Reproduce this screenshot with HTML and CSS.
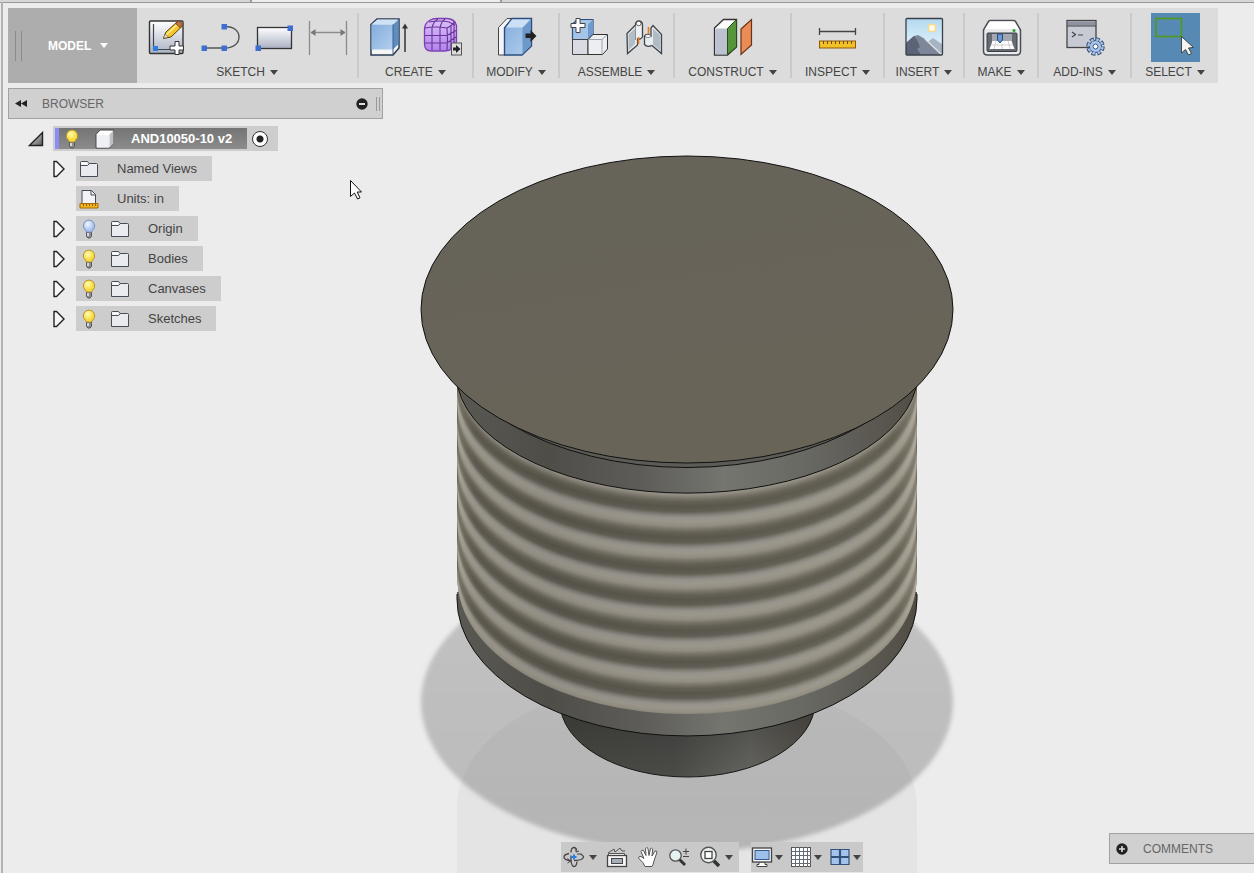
FILE: index.html
```html
<!DOCTYPE html>
<html lang="en">
<head>
<meta charset="utf-8">
<title>AND10050-10 v2</title>
<link rel="stylesheet" href="styles.css">
</head>
<body>
<svg class="defs" aria-hidden="true">
  <defs>
    <linearGradient id="steel" x1="0" y1="0" x2="0" y2="1"><stop offset="0" stop-color="#fff"/><stop offset="1" stop-color="#aab1c2"/></linearGradient>
    <linearGradient id="blue" x1="0" y1="0" x2="1" y2="1"><stop offset="0" stop-color="#82addc"/><stop offset="1" stop-color="#b4cfee"/></linearGradient>
    <linearGradient id="purple" x1="0" y1="0" x2="0" y2="1"><stop offset="0" stop-color="#dcc2f8"/><stop offset="1" stop-color="#b084ec"/></linearGradient>
    <linearGradient id="sky" x1="0" y1="0" x2="0" y2="1"><stop offset="0" stop-color="#b3d9f0"/><stop offset="1" stop-color="#eef8fc"/></linearGradient>
    <radialGradient id="glow" cx=".4" cy=".35"><stop offset="0" stop-color="#fffcb0"/><stop offset="1" stop-color="#f8d93c"/></radialGradient>
    <radialGradient id="dim" cx=".4" cy=".35"><stop offset="0" stop-color="#f2f6ff"/><stop offset="1" stop-color="#a9c3f3"/></radialGradient>
    <linearGradient id="fold" x1="0" y1="0" x2="1" y2="1"><stop offset="0" stop-color="#eee"/><stop offset="1" stop-color="#555"/></linearGradient>
  </defs>
  <symbol id="bulb-base" viewBox="0 0 14 20"><path d="M4.500 13h5v4.500l-1.500 1.500h-2l-1.500-1.500z" fill="#8a8d92" stroke="#54575c"/><path d="M6 14v3" stroke="#eee" stroke-width="1.500"/></symbol>
  <symbol id="bulb-on" viewBox="0 0 14 20"><use href="#bulb-base"/><path d="M7 1a6 5.800 0 0 1 3.600 10.200L9.500 13h-5L3.400 11.200A6 5.800 0 0 1 7 1z" fill="url(#glow)" stroke="#b9952f"/></symbol>
  <symbol id="bulb-off" viewBox="0 0 14 20"><use href="#bulb-base"/><path d="M7 1a6 5.800 0 0 1 3.600 10.200L9.500 13h-5L3.400 11.200A6 5.800 0 0 1 7 1z" fill="url(#dim)" stroke="#7d93bd"/></symbol>
  <symbol id="folder" viewBox="0 0 20 20"><path d="M1.500 17.500v-14q0-1 1-1h6l1.500 2h7.500q1 0 1 1v12z" fill="#e9ebef" stroke="#474d57"/><path d="M2 6.500h6.500l2-2" fill="none" stroke="#474d57"/><path d="M2.500 3.500h5.500v2h-5.500z" fill="#fff"/></symbol>
  <symbol id="expander" viewBox="0 0 12 18"><path d="M1 1.500h2.500L11 9 3.500 16.500H1z" fill="#f5f5f5" stroke="#222" stroke-width="1.400"/></symbol>
</svg>

<svg class="scene" viewBox="0 0 1254 873" preserveAspectRatio="xMidYMid slice" role="img" aria-label="3D model">
  <defs>
    <filter id="soft" x="-5%" y="-5%" width="110%" height="110%"><feGaussianBlur stdDeviation="2"/></filter>
    <linearGradient id="disc" x1="0" y1="0" x2=".3" y2="1"><stop offset="0" stop-color="#66635a"/><stop offset="1" stop-color="#696458"/></linearGradient>
    <linearGradient id="ring" x1="0" x2="1"><stop offset="0" stop-color="#5a5852"/><stop offset=".2" stop-color="#4f4d48"/><stop offset=".4" stop-color="#5d5c58"/><stop offset=".58" stop-color="#757570"/><stop offset=".75" stop-color="#696964"/><stop offset="1" stop-color="#514d45"/></linearGradient>
    <linearGradient id="stem" x1="0" x2="1"><stop offset="0" stop-color="#464641"/><stop offset=".45" stop-color="#4b4b48"/><stop offset=".75" stop-color="#656560"/><stop offset="1" stop-color="#554f47"/></linearGradient>
    <linearGradient id="stem-shade" x1="0" y1="0" x2="0" y2="1"><stop offset=".2" stop-color="#222" stop-opacity=".4"/><stop offset="1" stop-color="#222" stop-opacity="0"/></linearGradient>
    <linearGradient id="shadow" x1="0" y1="0" x2="0" y2="1"><stop offset="0" stop-color="#c3c3c3"/><stop offset="1" stop-color="#bababa"/></linearGradient>
    <linearGradient id="mirror" x1="0" y1="0" x2="0" y2="1"><stop offset="0" stop-color="#555" stop-opacity=".02"/><stop offset=".25" stop-color="#555" stop-opacity=".06"/><stop offset="1" stop-color="#555" stop-opacity=".05"/></linearGradient>
    <linearGradient id="side" x1="0" x2="1"><stop offset="0" stop-color="#cfc8b6" stop-opacity=".3"/><stop offset=".04" stop-color="#8a867a" stop-opacity=".1"/><stop offset=".2" stop-color="#444" stop-opacity=".08"/><stop offset=".5" stop-color="#999" stop-opacity=".05"/><stop offset=".95" stop-color="#aaa690" stop-opacity=".15"/><stop offset="1" stop-color="#cfc8b6" stop-opacity=".4"/></linearGradient>
  </defs>
  <ellipse cx="687" cy="702" rx="266" ry="150" fill="url(#shadow)" filter="url(#soft)"/>
  <path d="M457 873V806A230 130 0 0 1 917 806V873z" fill="url(#mirror)"/>
  <path d="M560 690V702A127.500 75 0 0 0 815 702V690z" fill="url(#stem)"/>
  <path d="M560 690V702A127.500 75 0 0 0 815 702V690z" fill="url(#stem-shade)" stroke="#161616"/>
  <path d="M457 592V599A230 137 0 0 0 917 599V592z" fill="url(#ring)"/>
  <path d="M457 594V599A230 137 0 0 0 917 599V594" fill="none" stroke="#111"/>
  <g id="ribs"></g>
  <path d="M457.500 368V578A229.500 136 0 0 0 916.500 578V368z" fill="url(#side)"/>
  <path d="M454 380L458 388A231 121 0 0 0 916 388L920 380L687 330z" fill="url(#ring)" stroke="#111"/>
  <ellipse cx="687" cy="319" rx="250" ry="148.500" fill="#5c5b56" stroke="#111"/>
  <ellipse cx="687" cy="309.500" rx="266" ry="153.500" fill="url(#disc)" stroke="#111"/>
  <path d="M350.500 180.500v16l4-3.500 3 6 2.500-1.200-2.800-5.800h4.300z" fill="#fff" stroke="#111"/>
</svg>

<div class="app">
  <div class="tabs"><span class="tab"></span><span class="tab tab-active"></span><span class="tab"></span></div>
  <header class="toolbar">
    <button class="model" type="button"><span class="grip"></span><span>MODEL</span><span class="caret"></span></button>

    <section class="group">
      <div class="tools">
        <button type="button" class="tool" aria-label="Create sketch"><svg viewBox="144 13 44 49" width="44" height="49"><rect x="149.500" y="21" width="33.500" height="32.500" rx="1" fill="url(#steel)" stroke="#333" stroke-width="1.400"/><path d="M153.500 24V49.500H180" fill="none" stroke="#3e454f" stroke-width="1.200"/><rect x="153" y="46" width="5" height="5" fill="#2f7de0"/><path d="M163.500 38.500l2.500-6.500 11.500-10.500 5 4.500-11.500 11z" fill="#f5c52a" stroke="#54440f"/><path d="M166 35l12-11" stroke="#fff09a" stroke-width="1.500"/><path d="M175.500 23.500l3-2.500q3 0 4 4l-2.500 2.500z" fill="#c2703f" stroke="#5e3520" stroke-width=".7"/><path d="M163.500 38.500l1.500-4.500 3.500 3z" fill="#f6dfb5" stroke="#444" stroke-width=".5"/><path d="M175 41.500h4v4.500h4.500v4H179v4.500h-4V50h-5v-4h5z" fill="#fff" stroke="#333"/></svg></button>
        <button type="button" class="tool" aria-label="Line"><svg viewBox="198 13 44 49" width="44" height="49"><path d="M204 48H225C234 48 239 43 239 37S234 26.500 225 26.500" fill="none" stroke="#555" stroke-width="1.400"/><path d="M201.500 45.500h5.500v5.500h-5.500zM221.500 45.500h5.500v5.500h-5.500zM221.500 24h5.500v5.500h-5.500z" fill="#3c6fd0"/></svg></button>
        <button type="button" class="tool" aria-label="Rectangle"><svg viewBox="252 13 44 49" width="44" height="49"><rect x="257.500" y="27.500" width="34" height="21" fill="url(#steel)" stroke="#333" stroke-width="1.300"/><path d="M287.500 25.500h5.500v5.500h-5.500zM255.500 45.500h5.500v5.500h-5.500z" fill="#3c6fd0"/></svg></button>
        <button type="button" class="tool" aria-label="Sketch dimension"><svg viewBox="306 13 44 49" width="44" height="49"><path d="M309.500 21v34M346.500 21v34M311 32.500h34" stroke="#8c8c8c" stroke-width="1.300"/><path d="M310.500 32.500l5-3.500v7zM345.500 32.500l-5-3.500v7z" fill="#777"/></svg></button>
      </div>
      <button type="button" class="label">SKETCH<span class="caret"></span></button>
    </section>

    <section class="group">
      <div class="tools">
        <button type="button" class="tool" aria-label="Extrude"><svg viewBox="367 13 44 49" width="44" height="49"><path d="M371 24.500l6-5.500h22v29l-6 7h-22z" fill="#f5f5f5" stroke="#2b3c55" stroke-width="1.500"/><path d="M371.500 24.500h21.500v25h-21.500z" fill="url(#blue)"/><path d="M372 24l5.500-4.500H398L393 24z" fill="#cfe1f4"/><path d="M393 24.500l5.500-5v24.500l-5.500 5.500z" fill="#5f8dc2"/><path d="M393 24.500V54" stroke="#3e6290"/><path d="M405 52V25" stroke="#333" stroke-width="1.500"/><path d="M402 28.500l3-5 3 5z" fill="#333"/></svg></button>
        <button type="button" class="tool" aria-label="Create form"><svg viewBox="421 13 44 49" width="44" height="49"><path d="M424.500 30q0-7 5-9.500 3-2 8-2h9q8 0 10 7v16q-1 5-4 7-3 2.500-8 2.500h-13q-7 0-7-7z" fill="url(#purple)" stroke="#7e3fb4" stroke-width="1.300"/><path d="M425 28q10-2 22 0 1 12 0 22M425 35.500h22l9-5M425 43h22l9-6M432 28v22M440 28v22M447 28q6-3 8-7M432 28q1-6 6-9M440 28q1-6 5-9M429 22q12-2 20 0l6 3M451 25v24M454 23v24" fill="none" stroke="#6b329c" stroke-width="1.100"/><rect x="451.500" y="43" width="10" height="12" fill="#ddd" stroke="#555"/><path d="M453 47.500h3V45l4.500 4-4.500 4v-2.500h-3z" fill="#222"/></svg></button>
      </div>
      <button type="button" class="label">CREATE<span class="caret"></span></button>
    </section>

    <section class="group">
      <div class="tools">
        <button type="button" class="tool" aria-label="Press pull"><svg viewBox="494 13 44 49" width="44" height="49"><path d="M498.500 27.500l8.500-9h5l-7 9V55h-6.500z" fill="#f4f5f8" stroke="#444"/><path d="M504.500 28l7.500-9.500h19.500V46L522 55h-17.500z" fill="url(#blue)" stroke="#2b4e7c" stroke-width="1.400"/><path d="M506 27.500l6-8H530l-7.500 8z" fill="#cde0f5"/><path d="M522.500 28l8.500-8.500v26l-8.500 8.500z" fill="#6c98ca"/><path d="M525.500 33.500h5v-3.500l6 6-6 6v-4h-5z" fill="#222"/></svg></button>
      </div>
      <button type="button" class="label">MODIFY<span class="caret"></span></button>
    </section>

    <section class="group">
      <div class="tools">
        <button type="button" class="tool" aria-label="New component"><svg viewBox="568 13 44 49" width="44" height="49"><path d="M572.500 24l5-4.500h15.500V34l-5 5.500h-15.500z" fill="#a4c4e8" stroke="#2b4e7c" stroke-width="1.200"/><path d="M588 24.500l5-5V34l-5 5z" fill="#6f9ace"/><path d="M572.500 39.500h15.500v15h-15.500z" fill="#d8dbe2" stroke="#444"/><path d="M588 39.500l5-5h14.500V49l-5 5.500H588z" fill="#eceef2" stroke="#333"/><path d="M588.500 39.500h13.500v14.500M602 39.500l5-4.500" fill="none" stroke="#9da3ae"/><path d="M576 18.500h4v5h5v4h-5v5h-4v-5h-5v-4h5z" fill="#fff" stroke="#444"/></svg></button>
        <button type="button" class="tool" aria-label="Joint"><svg viewBox="622 13 44 49" width="44" height="49"><path d="M627 33.500l8.500-8.500q0-3.500 3-4 4 0 4 4v12q-2 3-5 2v6l-10 8.500z" fill="#edf0f2" stroke="#3f4348" stroke-width="1.300"/><path d="M628.500 34.500l6.500-6.500v16l-6.500 6.500z" fill="#b3bdc5"/><path d="M635.500 26v14" stroke="#8b9298"/><circle cx="638.700" cy="23.500" r="2.300" fill="#fff" stroke="#444" stroke-width=".8"/><path d="M638.500 37v7M648.500 27v8" stroke="#e87917" stroke-width="1.600"/><path d="M644.500 36q2-3 6.500 0v-8l2-2.500 8.500 9v19l-9.500-8q-5 2-7.500-1z" fill="#eaedf0" stroke="#3f4348" stroke-width="1.300"/><path d="M653 28.500l7.500 7v15.500l-7.500-6.500z" fill="#b0bcc5"/><ellipse cx="648" cy="36" rx="3" ry="1.500" fill="#fff" stroke="#555" stroke-width=".7"/></svg></button>
      </div>
      <button type="button" class="label">ASSEMBLE<span class="caret"></span></button>
    </section>

    <section class="group">
      <div class="tools">
        <button type="button" class="tool" aria-label="Offset plane"><svg viewBox="711 13 44 49" width="44" height="49"><path d="M714.500 28l9-8.500h13V47l-9 8h-13z" fill="#fff" stroke="#333" stroke-width="1.300"/><path d="M715.200 28.500h12V54.500h-12z" fill="#bcc2cf"/><path d="M727.500 28.500l9-9V47l-9 7.500z" fill="#57953d" stroke="#254d17"/><path d="M741 29l10.500-9.500V45L741 54.500z" fill="#e98c55" stroke="#6b3216" stroke-width="1.200"/></svg></button>
      </div>
      <button type="button" class="label">CONSTRUCT<span class="caret"></span></button>
    </section>

    <section class="group">
      <div class="tools">
        <button type="button" class="tool" aria-label="Measure"><svg viewBox="816 13 44 49" width="44" height="49"><path d="M820 31.500h35M819.500 28v7M855.500 28v7" stroke="#444" stroke-width="1.300"/><rect x="819.500" y="41" width="36" height="7" fill="#f2c126" stroke="#8e5a0a"/><path d="M823.500 41v3M827.500 41v3M831.500 41v3M835.500 41v3M839.500 41v3M843.500 41v3M847.500 41v3M851.500 41v3" stroke="#6f4708"/></svg></button>
      </div>
      <button type="button" class="label">INSPECT<span class="caret"></span></button>
    </section>

    <section class="group">
      <div class="tools">
        <button type="button" class="tool" aria-label="Insert image"><svg viewBox="902 13 44 49" width="44" height="49"><rect x="906" y="18.500" width="36.500" height="36.500" fill="url(#sky)"/><path d="M925 44l8-6 9 6v11h-14z" fill="#a5b3c3"/><path d="M906 43l8-7 4-1 7 4 10 9 7 7H906z" fill="#7e8799"/><path d="M906 43l8-7 3 4 3 7-3 2 4 5.500h-15z" fill="#5c6376"/><path d="M925 39l17 16" stroke="#dfe5df" stroke-width="1.400"/><rect x="928.500" y="24.500" width="7" height="7" rx="2" fill="#fffbe8" stroke="#f7db8c" stroke-width="1.500"/><rect x="906" y="18.500" width="36.500" height="36.500" rx="1" fill="none" stroke="#3a3f48" stroke-width="1.300"/></svg></button>
      </div>
      <button type="button" class="label">INSERT<span class="caret"></span></button>
    </section>

    <section class="group">
      <div class="tools">
        <button type="button" class="tool" aria-label="3D print"><svg viewBox="979 13 44 49" width="44" height="49"><path d="M983.500 30l5-8.500q.5-1 2-1h23q1.500 0 2 1l5 8.500v21q0 4-4 4h-29q-4 0-4-4z" fill="#e9eaec" stroke="#4a4d54" stroke-width="1.500"/><path d="M985 29l5-7.500h24l5 7.500z" fill="#fff"/><rect x="987" y="33" width="30" height="18.500" rx="1" fill="#666a72" stroke="#3b3e44"/><path d="M992 34h20v15h-20z" fill="#a4a8b0"/><path d="M992.500 41h19l3 8h-25z" fill="#fff"/><path d="M996 41l-2 8M1008 41l2 8M1002 44v5M991 45h22" stroke="#bbb" stroke-width=".7"/><path d="M997.500 34h5v6l-2.500 3-2.500-3z" fill="#6e9ad2" stroke="#284a80"/><circle cx="1014" cy="30.500" r="1.500" fill="#2fa02f"/></svg></button>
      </div>
      <button type="button" class="label">MAKE<span class="caret"></span></button>
    </section>

    <section class="group">
      <div class="tools">
        <button type="button" class="tool" aria-label="Scripts and add-ins"><svg viewBox="1062 13 44 49" width="44" height="49"><rect x="1066" y="20.500" width="29" height="27" fill="#c7cad3" stroke="#444" stroke-width="1.300"/><path d="M1067 21.500h27v4h-27z" fill="#8d929e"/><path d="M1066 26h29" stroke="#444"/><path d="M1071 32l3.500 2.500-3.500 2.500M1077 35h5" fill="none" stroke="#444" stroke-width="1.200"/><circle cx="1094.500" cy="46.500" r="7" fill="none" stroke="#2c4a78" stroke-width="4.500" stroke-dasharray="3.700 1.798"/><circle cx="1094.500" cy="46.500" r="6" fill="#a9c6ea" stroke="#2c4a78"/><circle cx="1094.500" cy="46.500" r="7" fill="none" stroke="#a9c6ea" stroke-width="2.500" stroke-dasharray="2.500 2.998" stroke-dashoffset="-.6"/><circle cx="1094.500" cy="46.500" r="2.500" fill="#fff" stroke="#35588b"/></svg></button>
      </div>
      <button type="button" class="label">ADD-INS<span class="caret"></span></button>
    </section>

    <section class="group group-last">
      <div class="tools">
        <button type="button" class="tool tool-active" aria-label="Select"><svg viewBox="1150 13 49 49" width="49" height="49"><rect x="1155" y="18.500" width="25.500" height="18" fill="none" stroke="#4f9a16" stroke-width="1.600"/><path d="M1180.500 36.500V53l4-3.500 3 5.500 3-1.500-3-5.500 5-.5z" fill="#f4f4f4" stroke="#444"/></svg></button>
      </div>
      <button type="button" class="label">SELECT<span class="caret"></span></button>
    </section>
  </header>

  <aside class="browser">
    <div class="panel-head">
      <button type="button" class="plain" aria-label="Collapse"><svg width="12" height="9" viewBox="0 0 12 9"><path d="M6 1v7L0 4.500zM12 1v7L6 4.500z" fill="#222"/></svg></button>
      <span class="panel-title">BROWSER</span>
      <button type="button" class="plain" aria-label="Minimize"><svg width="12" height="12" viewBox="0 0 12 12"><circle cx="6" cy="6" r="5.700" fill="#222"/><path d="M3 6h6" stroke="#ddd" stroke-width="2"/></svg></button>
      <span class="panel-grip"></span>
    </div>
    <ul class="tree">
      <li class="row root">
        <button type="button" class="plain twist" aria-label="Collapse AND10050-10 v2"><svg width="16" height="16" viewBox="0 0 16 16"><path d="M14.500 1.500v13h-13z" fill="url(#fold)" stroke="#222" stroke-width="1.400"/></svg></button>
        <div class="root-item">
          <div class="root-name"><svg width="14" height="20"><use href="#bulb-on"/></svg><svg width="20" height="20" viewBox="0 0 20 20"><path d="M1 5.500L5 1h13.500v13.500l-4 4.500H1z" fill="#fff" stroke="#444"/><path d="M14.500 5.500l4-4v13l-4 4z" fill="#bcbfc6"/><path d="M2 6h12v12.500H2z" fill="#eef0f3"/></svg><span>AND10050-10 v2</span></div>
          <label class="activate"><input type="radio" name="active" checked aria-label="Activate component"></label>
        </div>
      </li>
      <li class="row"><button type="button" class="plain twist" aria-label="Expand Named Views"><svg width="12" height="18"><use href="#expander"/></svg></button><div class="item"><svg width="20" height="20"><use href="#folder"/></svg><span>Named Views</span></div></li>
      <li class="row"><span class="twist"></span><div class="item"><svg width="20" height="20" viewBox="0 0 20 20"><path d="M3 15V1.500h9.500l4 4V15z" fill="#f1f3f6" stroke="#444b55"/><path d="M12 1.500V6h4.500" fill="none" stroke="#444b55"/><path d="M1 14.500h18v4.500H1z" fill="#f0b51f" stroke="#a86b08"/><path d="M4.500 15v2M7.500 15v2M10.500 15v2M13.500 15v2M16.500 15v2" stroke="#8f5c08"/></svg><span>Units: in</span></div></li>
      <li class="row"><button type="button" class="plain twist" aria-label="Expand Origin"><svg width="12" height="18"><use href="#expander"/></svg></button><div class="item"><svg width="20" height="20"><use href="#bulb-off"/></svg><svg width="20" height="20"><use href="#folder"/></svg><span>Origin</span></div></li>
      <li class="row"><button type="button" class="plain twist" aria-label="Expand Bodies"><svg width="12" height="18"><use href="#expander"/></svg></button><div class="item"><svg width="20" height="20"><use href="#bulb-on"/></svg><svg width="20" height="20"><use href="#folder"/></svg><span>Bodies</span></div></li>
      <li class="row"><button type="button" class="plain twist" aria-label="Expand Canvases"><svg width="12" height="18"><use href="#expander"/></svg></button><div class="item"><svg width="20" height="20"><use href="#bulb-on"/></svg><svg width="20" height="20"><use href="#folder"/></svg><span>Canvases</span></div></li>
      <li class="row"><button type="button" class="plain twist" aria-label="Expand Sketches"><svg width="12" height="18"><use href="#expander"/></svg></button><div class="item"><svg width="20" height="20"><use href="#bulb-on"/></svg><svg width="20" height="20"><use href="#folder"/></svg><span>Sketches</span></div></li>
    </ul>
  </aside>

  <footer class="footer">
    <nav class="nav" aria-label="View controls">
      <div class="nav-set nav-view">
        <button type="button" class="plain nav-btn" aria-label="Orbit"><svg width="22" height="22" viewBox="0 0 22 22"><path d="M8 6.500q0-5 3-5 2 0 2.500 3M8 9.500v5q.5 6 3 6 2.500 0 3-5M6 7.500q-5 1-5 3.500t5 3.500l2 .3M11 14.500q9 0 9.500-3.500 0-1.500-3-3" fill="none" stroke="#444" stroke-width="1.300"/><path d="M13 2v4l3-1M4.500 12.500l3 2.500-3 2M14 8h4.500" fill="none" stroke="#444"/><path d="M8.500 11h5M11 8.500v5" stroke="#2680e8" stroke-width="2"/></svg><span class="caret"></span></button>
        <button type="button" class="plain" aria-label="Look at"><svg width="22" height="22" viewBox="0 0 22 22"><path d="M2 7l6-4 1 3 5-4 2 3h3" fill="none" stroke="#555"/><path d="M2.500 7.500h16v2h-16z" fill="#fff" stroke="#555"/><rect x="1.500" y="9.500" width="19" height="11" fill="#f5f5f5" stroke="#444" stroke-width="1.300"/><rect x="5.500" y="12.500" width="11" height="5" fill="#a8aeb8" stroke="#444"/></svg></button>
        <button type="button" class="plain" aria-label="Pan"><svg width="22" height="22" viewBox="0 0 22 22"><path d="M8 20.500Q7 17 1.500 12q0-2 2.500-1.500l3 2-3-7q.500-2 2.500-1l2.500 5-.5-7q1.500-2 2.500 0l1 7 1.500-7q1.500-1 2.200.5l-.7 7 3-5q2-.5 2 1l-3 9q-1 4-2 5.500z" fill="#fff" stroke="#555"/></svg></button>
        <button type="button" class="plain" aria-label="Zoom"><svg width="22" height="22" viewBox="0 0 22 22"><path d="M11 13l6 6" stroke="#333" stroke-width="3"/><circle cx="7.500" cy="9.500" r="5.700" fill="#e6f2f2" stroke="#555" stroke-width="1.300"/><path d="M15 5.500h6M18 2.500v6M15 10.500h6" stroke="#444"/></svg></button>
        <button type="button" class="plain nav-btn" aria-label="Fit"><svg width="22" height="22" viewBox="0 0 22 22"><path d="M14 14l6 6" stroke="#333" stroke-width="3.500"/><circle cx="9.500" cy="9" r="7.700" fill="#eef4f4" stroke="#555" stroke-width="1.400"/><rect x="6" y="5.500" width="7" height="7" fill="#fff" stroke="#444" stroke-width="1.300"/></svg><span class="caret"></span></button>
      </div>
      <div class="nav-set nav-display">
        <button type="button" class="plain nav-btn" aria-label="Display settings"><svg width="22" height="22" viewBox="0 0 22 22"><path d="M8 16h6v2.500h2v2H6v-2h2z" fill="#fff" stroke="#444"/><rect x="1.500" y="2" width="19" height="14" fill="#f5f5f5" stroke="#444" stroke-width="1.300"/><rect x="4" y="4.500" width="14" height="9" fill="#9dc0ea" stroke="#34598e"/></svg><span class="caret"></span></button>
        <button type="button" class="plain nav-btn" aria-label="Grid and snaps"><svg width="22" height="22" viewBox="0 0 22 22"><rect x="1.500" y="1.500" width="19" height="19" fill="#fff" stroke="#555"/><path d="M5.500 1v20M9.500 1v20M13.500 1v20M17.500 1v20M1 5.500h20M1 9.500h20M1 13.500h20M1 17.500h20" stroke="#666b78"/></svg><span class="caret"></span></button>
        <button type="button" class="plain nav-btn" aria-label="Viewports"><svg width="22" height="22" viewBox="0 0 22 22"><path d="M2 3.500h8.500v7H2zM11.500 3.500H20v7h-8.500zM2 11.500h8.500v7H2zM11.500 11.500H20v7h-8.500z" fill="#a3c3ec" stroke="#34507c" stroke-width="1.200"/></svg><span class="caret"></span></button>
      </div>
    </nav>
    <button type="button" class="comments"><svg width="12" height="12" viewBox="0 0 12 12"><circle cx="6" cy="6" r="5.700" fill="#222"/><path d="M3 6h6M6 3v6" stroke="#ddd" stroke-width="1.600"/></svg><span>COMMENTS</span></button>
  </footer>
</div>
<script src="ribs.js"></script>
</body>
</html>
```

FILE: styles.css
```css
* { box-sizing: border-box; }

body {
  margin: 0;
  background: #ececec;
  color: #444;
  font-family: "Liberation Sans", Arial, sans-serif;
  font-size: 12px;
}

button {
  margin: 0;
  padding: 0;
  border: 0;
  background: none;
  color: inherit;
  font: inherit;
}

svg { display: block; flex: none; }

.defs { position: absolute; width: 0; height: 0; }

.scene {
  position: absolute;
  inset: 0;
  width: 100%;
  height: 100%;
}

.app {
  position: relative;
  display: flex;
  flex-direction: column;
  min-height: 100vh;
}

.app::before {
  content: "";
  position: absolute;
  top: 2px;
  bottom: 0;
  left: 1px;
  width: 2px;
  background: #b2b2b2;
}

.tabs {
  display: grid;
  grid-template-columns: 252px 250px 1fr;
  height: 3px;
  border-bottom: 1px solid #999;
}

.tab { background: #d6d6d6; border-right: 2px solid #999; }
.tab-active { background: #eee; }
.tab:last-child { border-right: 0; }

.toolbar {
  display: grid;
  grid-template-columns: 129px 222px 115px 86px 115px 117px 93px 80px 74px 93px 86px;
  grid-template-rows: 75px;
  align-self: flex-start;
  margin: 5px 0 5px 8px;
  background: #dcdcdc;
}

.model {
  display: flex;
  align-items: center;
  gap: 9px;
  padding-left: 7px;
  background: #adadad;
  color: #fff;
  font-weight: bold;
}

.grip {
  width: 7px;
  height: 30px;
  margin-right: 17px;
  border: solid #8c8c8c;
  border-width: 0 1px;
}

.caret {
  width: 0;
  height: 0;
  border: 4px solid transparent;
  border-top: 5px solid currentColor;
  border-bottom: 0;
}

.group {
  display: flex;
  flex-direction: column;
  align-items: center;
  margin: 5px 0;
  border-right: 2px solid #cacaca;
}

.group-last { border-right: 0; }

.tools { display: flex; gap: 10px; }

.tool-active { background: #5689b3; }

.label {
  display: flex;
  align-items: center;
  gap: 5px;
  line-height: 20px;
  white-space: nowrap;
}

.plain { display: flex; align-items: center; }

.browser { width: 375px; margin-left: 8px; }

.panel-head {
  display: flex;
  align-items: center;
  height: 31px;
  padding: 0 2px 0 6px;
  border: 1px solid #a2a2a2;
  background: #d0d0d0;
  color: #666;
}

.panel-title { flex: 1; margin-left: 15px; }

.panel-grip {
  width: 4px;
  height: 14px;
  margin-left: 8px;
  border: solid #999;
  border-width: 0 1px;
}

.tree {
  display: flex;
  flex-direction: column;
  gap: 5px;
  margin: 7px 0 0;
  padding: 0;
  list-style: none;
  font-size: 13px;
}

.row {
  display: flex;
  align-items: center;
  height: 25px;
  padding-left: 45px;
}

.twist { width: 23px; }

.item {
  display: flex;
  align-items: center;
  gap: 11px;
  height: 25px;
  padding: 0 15px 0 3px;
  background: #cdcdcd;
}

.item span { margin-left: 7px; }

.root { padding-left: 20px; }
.root .twist { width: 25px; }

.root-item {
  display: flex;
  height: 25px;
  padding-left: 2px;
  background: #cdcdcd;
}

.root-name {
  display: flex;
  align-items: center;
  gap: 16px;
  margin: 2px 0;
  padding: 0 15px 0 6px;
  border-left: 4px solid #8c8cf5;
  background: linear-gradient(#747474, #8c8c8c);
  color: #fff;
  font-weight: bold;
}

.activate { display: flex; align-items: center; padding: 0 10px 0 5px; }

.activate input {
  appearance: none;
  width: 16px;
  height: 16px;
  margin: 0;
  border: 1px solid #333;
  border-radius: 50%;
  background: radial-gradient(circle, #222 3px, #fff 4px);
}

.footer {
  display: grid;
  grid-template-columns: 558fr auto 245fr 145px;
  align-items: end;
  margin-top: auto;
}

.nav {
  grid-column: 2;
  display: flex;
  gap: 12px;
  margin-bottom: 1px;
}

.nav-set {
  display: flex;
  align-items: center;
  height: 30px;
  background: #c9c9c9;
}

.nav-view { gap: 9px; padding: 0 6px 0 2px; }
.nav-display { gap: 7px; padding-right: 2px; }
.nav-btn { gap: 4px; }
.nav-display .nav-btn { gap: 2px; }

.comments {
  grid-column: 4;
  display: flex;
  align-items: center;
  gap: 15px;
  height: 31px;
  margin-bottom: 9px;
  padding-left: 6px;
  border: 1px solid #a2a2a2;
  border-right: 0;
  background: #d0d0d0;
  color: #666;
}
```

FILE: ribs.js
```js
// Paints the threaded side of the cylinder as stacked layers, lowest first.
(() => {
  const group = document.getElementById("ribs");
  const firstRidge = 516;
  const pitch = 31.1;

  // Shading over one thread, from the top of a ridge to the top of the next.
  const profile = [
    [0, [132, 129, 121]],
    [0.08, [150, 147, 139]],
    [0.2, [156, 151, 139]],
    [0.34, [147, 142, 130]],
    [0.45, [120, 116, 105]],
    [0.56, [98, 94, 82]],
    [0.72, [86, 82, 71]],
    [0.88, [95, 91, 82]],
    [1, [132, 129, 121]],
  ];

  const shade = (t) => {
    const next = profile.findIndex(([stop]) => stop >= t) || 1;
    const [t0, a] = profile[next - 1];
    const [t1, b] = profile[next];
    const k = (t - t0) / (t1 - t0);
    return a.map((c, i) => Math.round(c + (b[i] - c) * k));
  };

  for (let bottom = 714; bottom >= 490; bottom -= 1) {
    const turns = (bottom - firstRidge) / pitch;
    const colour = shade(turns - Math.floor(turns));
    const ry = 122 + (14 * (bottom - 493)) / 243;
    const cy = bottom - ry;
    const layer = document.createElementNS("http://www.w3.org/2000/svg", "path");
    layer.setAttribute("d", `M457.5 340V${cy}A229.500 ${ry} 0 0 0 916.500 ${cy}V340z`);
    layer.setAttribute("fill", `rgb(${colour.join(",")})`);
    group.appendChild(layer);
  }
})();
```
